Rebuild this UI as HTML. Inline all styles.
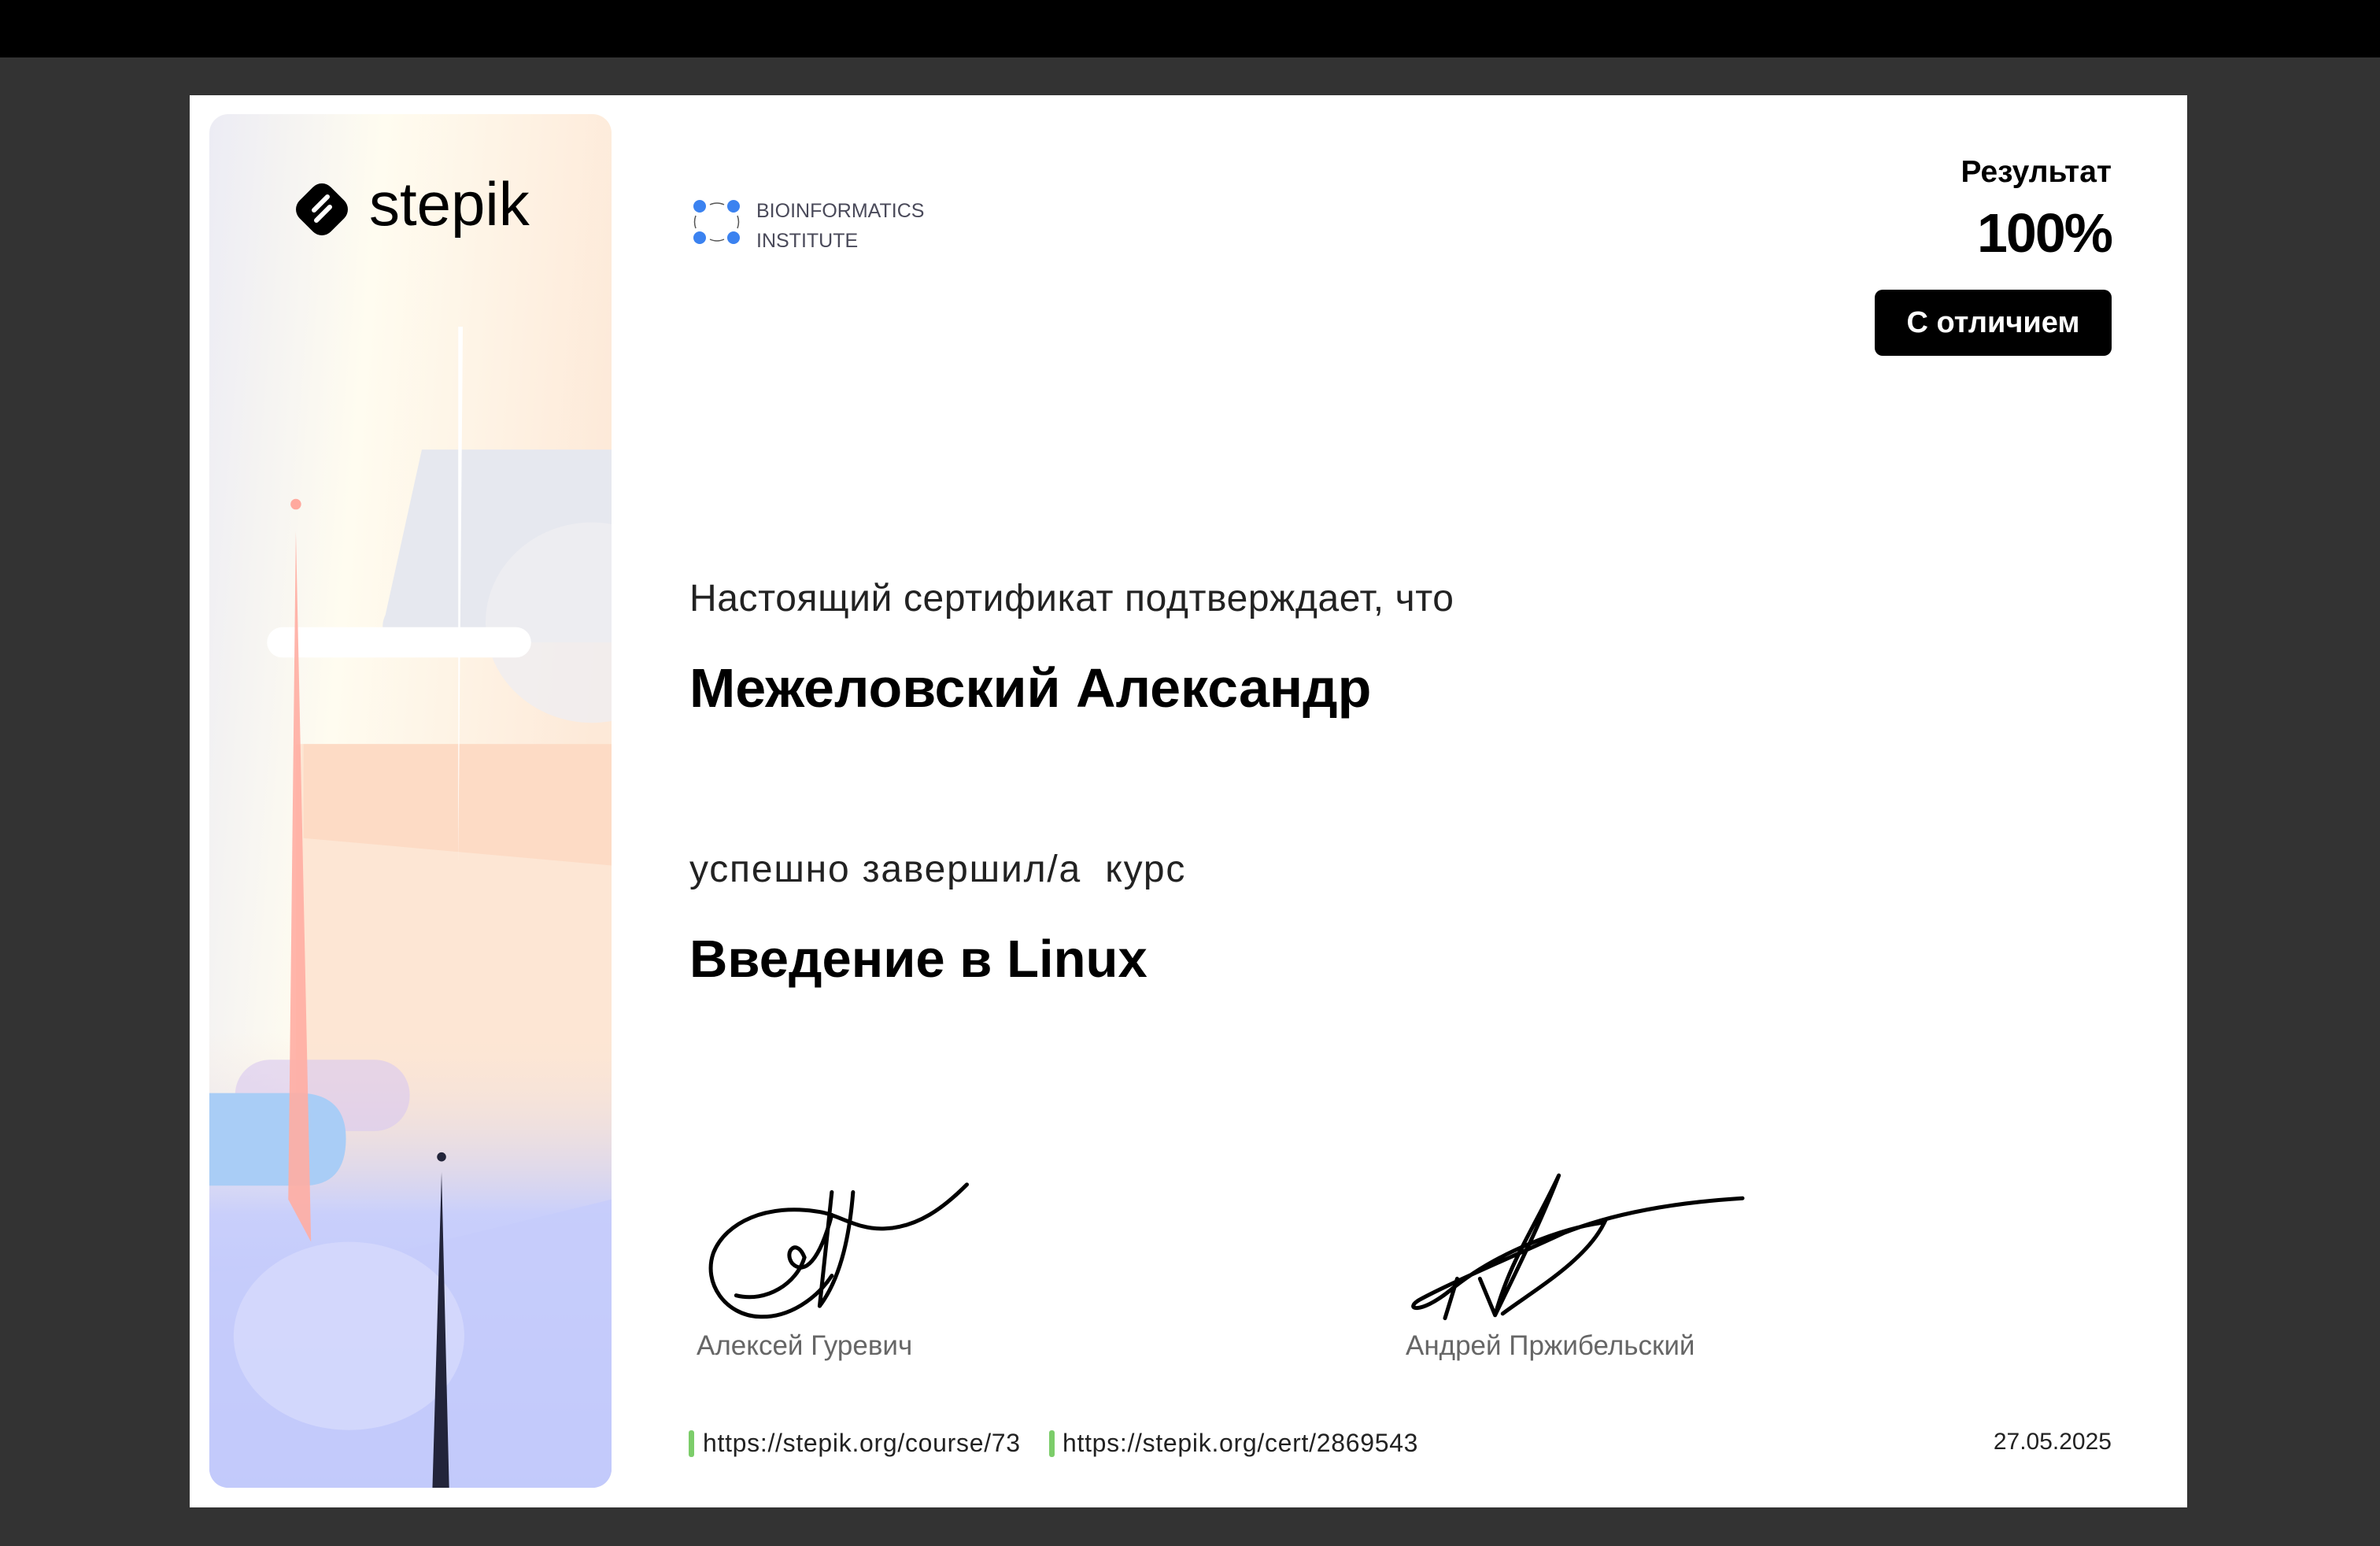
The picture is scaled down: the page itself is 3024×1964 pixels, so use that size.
<!DOCTYPE html>
<html><head><meta charset="utf-8"><style>
*{margin:0;padding:0;box-sizing:border-box}
body{width:3024px;height:1964px;background:#333333;position:relative;overflow:hidden;font-family:"Liberation Sans","DejaVu Sans",sans-serif}
.bar{position:absolute;left:0;top:0;width:3024px;height:73px;background:#000}
.cert{position:absolute;left:241px;top:121px;width:2538px;height:1794px;background:#fff}
.panel{position:absolute;left:266px;top:145px;width:511px;height:1745px;border-radius:24px;overflow:hidden}
.t{position:absolute;white-space:nowrap;color:#111}
</style></head><body>
<div class="bar"></div>
<div class="cert"></div>
<div class="panel">
<svg width="511" height="1745" viewBox="138 75 265 905" preserveAspectRatio="none">
<defs>
<linearGradient id="bg" x1="0" y1="0" x2="1" y2="0.3">
<stop offset="0" stop-color="#ececf4"/><stop offset="0.4" stop-color="#fffcf0"/><stop offset="1" stop-color="#fde9d8"/></linearGradient>
<linearGradient id="bot" x1="0" y1="0" x2="0" y2="1">
<stop offset="0" stop-color="#fbe6d6" stop-opacity="0"/><stop offset="0.4" stop-color="#c9cffb"/><stop offset="1" stop-color="#b6c0fb"/></linearGradient>
</defs>
<rect x="138" y="75" width="265" height="905" fill="url(#bg)"/>
<rect x="195" y="490" width="208" height="300" fill="#fde6d4"/>
<path d="M200,490 L403,490 L403,570 L200,552 Z" fill="#fdd8c0" opacity="0.8"/>
<path d="M278,296 L403,296 L403,423 L262,423 Q248,418 254,405 Z" fill="#e6e8ef"/>
<ellipse cx="390" cy="410" rx="70" ry="66" fill="#efeef1" opacity="0.8"/>
<rect x="176" y="413" width="174" height="20" rx="10" fill="#fff"/>
<path d="M302,215 L305,215 L302,570 Z" fill="#fff"/>
<rect x="138" y="680" width="265" height="300" fill="url(#bot)"/>
<path d="M138,838 L260,825 L403,790 L403,980 L138,980 Z" fill="#c6ccfb" opacity="0.8"/>
<ellipse cx="230" cy="880" rx="76" ry="62" fill="#d6dafc" opacity="0.8"/>
<rect x="155" y="698" width="115" height="47" rx="23" fill="#d9c8f0" opacity="0.6"/>
<path d="M138,720 L200,720 Q228,722 228,750 Q228,781 200,781 L138,781 Z" fill="#a9cdf6"/>
<circle cx="195" cy="332" r="3.5" fill="#ffa99e"/>
<path d="M195,350 L205,818 L190,790 Z" fill="#ffada2" opacity="0.9"/>
<circle cx="291" cy="762" r="3" fill="#23253a"/>
<path d="M291,772 L296,980 L285,980 Z" fill="#22243a"/>
</svg>
</div>
<!-- stepik logo -->
<svg style="position:absolute;left:369px;top:226px" width="80" height="80" viewBox="0 0 80 80">
<rect x="12" y="12" width="56" height="56" rx="16" transform="rotate(45 40 40)" fill="#000"/>
<path d="M47,24 L30,41 M50,37 L33,54" stroke="#fff" stroke-width="6" stroke-linecap="round" fill="none"/>
</svg>
<div class="t" style="left:469px;top:214px;font-size:78px;color:#000;letter-spacing:0px">stepik</div>
<!-- bio logo -->
<svg style="position:absolute;left:880px;top:252px" width="62" height="60" viewBox="0 0 62 60">
<circle cx="9" cy="10" r="8" fill="#3b82f0"/><circle cx="52" cy="10" r="8" fill="#3b82f0"/>
<circle cx="9" cy="50" r="8" fill="#3b82f0"/><circle cx="52" cy="50" r="8" fill="#3b82f0"/>
<path d="M22,8 Q31,4 40,8 M22,52 Q31,56 40,52 M4,22 Q1,30 4,38 M57,22 Q60,30 57,38" stroke="#555" stroke-width="1.5" fill="none"/>
</svg>
<div class="t" style="left:961px;top:249px;font-size:25px;color:#4a4a5a;line-height:38px">BIOINFORMATICS<br>INSTITUTE</div>
<!-- result -->
<div class="t" style="right:341px;top:197px;font-size:39px;font-weight:bold;color:#000">Результат</div>
<div class="t" style="right:341px;top:256px;font-size:70px;font-weight:bold;color:#000;letter-spacing:-2px">100%</div>
<div style="position:absolute;left:2382px;top:368px;width:301px;height:84px;background:#000;border-radius:10px;color:#fff;font-size:38px;font-weight:bold;text-align:center;line-height:84px">С отличием</div>
<!-- main text -->
<div class="t" style="left:876px;top:733px;font-size:48px;color:#222;letter-spacing:0.6px">Настоящий сертификат подтверждает, что</div>
<div class="t" style="left:876px;top:834px;font-size:70px;font-weight:bold;color:#000">Межеловский Александр</div>
<div class="t" style="left:876px;top:1077px;font-size:48px;color:#222;letter-spacing:1.8px">успешно завершил/а&nbsp; курс</div>
<div class="t" style="left:876px;top:1180px;font-size:67px;font-weight:bold;color:#000">Введение в Linux</div>
<!-- signatures -->
<svg style="position:absolute;left:0;top:0" width="3024" height="1964" viewBox="0 0 1568 1018" preserveAspectRatio="none">
<g fill="none" stroke="#000" stroke-width="2.6" stroke-linecap="round">
<path d="M637,780 C622,795 605,808 583,809 C565,810 553,800 540,798 C505,792 478,805 470,825 C463,845 478,866 500,867 C520,868 538,855 548,840"/>
<path d="M548,785 L540,860 M562,785 C560,810 555,840 540,860 M548,800 C540,830 530,840 522,832 C516,824 525,815 530,828 C525,845 505,858 485,853"/>
<path d="M1148,789 C1100,792 1060,800 1030,812 C1000,826 955,845 935,856 C925,862 935,866 955,850 C985,825 1030,808 1057,805 C1045,830 1010,850 990,865"/>
<path d="M1027,774 C1010,810 995,830 985,866 M1027,774 C1015,805 1000,835 985,866 M985,866 L975,842 M960,842 L952,868"/>
</g>
</svg>
<div class="t" style="left:885px;top:1690px;font-size:35px;color:#666">Алексей Гуревич</div>
<div class="t" style="left:1786px;top:1690px;font-size:35px;color:#666">Андрей Пржибельский</div>
<!-- links -->
<div style="position:absolute;left:875px;top:1817px;width:7px;height:34px;background:#7ccd6a;border-radius:3px"></div>
<div class="t" style="left:893px;top:1815px;font-size:32px;color:#222;letter-spacing:0.7px">https://stepik.org/course/73</div>
<div style="position:absolute;left:1333px;top:1817px;width:7px;height:34px;background:#7ccd6a;border-radius:3px"></div>
<div class="t" style="left:1350px;top:1815px;font-size:32px;color:#222;letter-spacing:0.7px">https://stepik.org/cert/2869543</div>
<div class="t" style="right:341px;top:1815px;font-size:30px;color:#222">27.05.2025</div>
</body></html>
